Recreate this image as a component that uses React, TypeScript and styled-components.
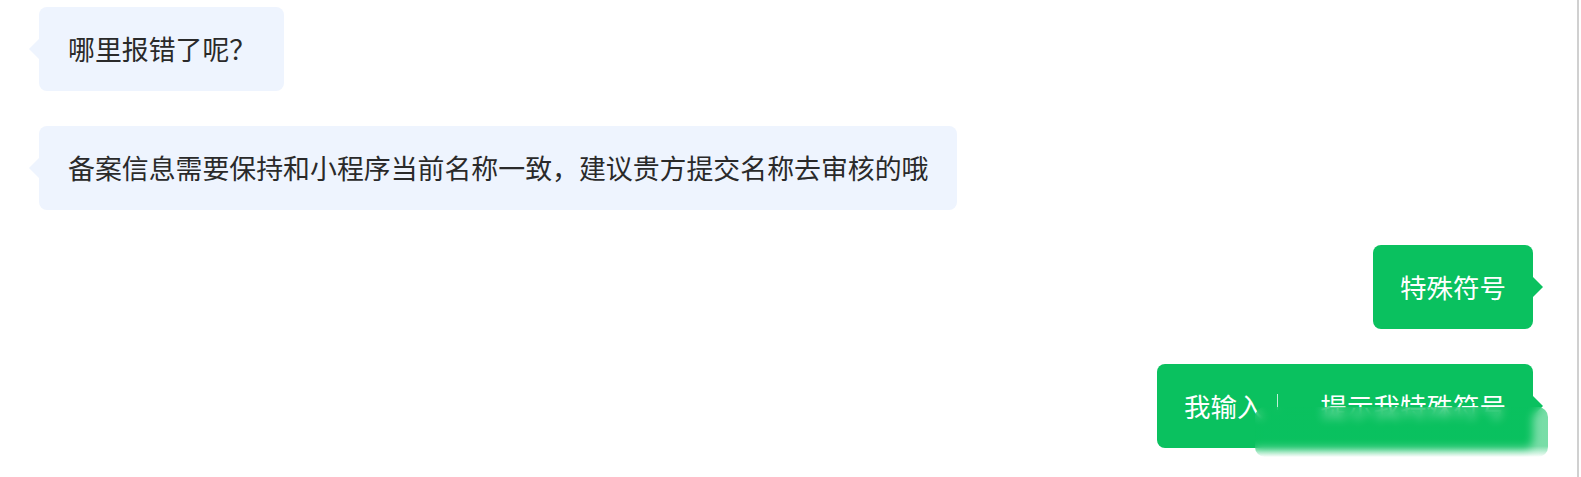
import React from "react";
import styled, { createGlobalStyle, css } from "styled-components";

const Global = createGlobalStyle`
  html, body { margin: 0; padding: 0; background: #ffffff; }
  body { font-family: "Noto Sans CJK SC", "Noto Sans", sans-serif; overflow: hidden; }
`;

const Frame = styled.div`
  width: 1579px;
  height: 477px;
  box-sizing: border-box;
  border-right: 2px solid #d0d0d0;
  position: relative;
  overflow: hidden;
`;

const Thread = styled.div`
  display: flex;
  flex-direction: column;
  gap: 35px;
  padding: 7px 44px 0 39px;
`;

const Row = styled.div<{ $mine?: boolean }>`
  display: flex;
  justify-content: ${(p) => (p.$mine ? "flex-end" : "flex-start")};
`;

const Bubble = styled.div<{ $mine?: boolean }>`
  position: relative;
  box-sizing: border-box;
  height: 84px;
  display: flex;
  align-items: center;
  border-radius: 8px;
  line-height: 36px;
  white-space: nowrap;
  ${(p) =>
    p.$mine
      ? css`
          background: #0ac15f;
          color: #ffffff;
          font-size: 26.5px;
          padding: 0 27px 0 27px;
        `
      : css`
          background: #eef4fe;
          color: #2a2a2a;
          font-size: 26.9px;
          padding: 0 28px 0 29px;
        `}
  &::before {
    content: "";
    position: absolute;
    top: 50%;
    margin-top: -10px;
    border-top: 10px solid transparent;
    border-bottom: 10px solid transparent;
    ${(p) =>
      p.$mine
        ? css`
            right: -10px;
            border-left: 10px solid #0ac15f;
          `
        : css`
            left: -10px;
            border-right: 10px solid #eef4fe;
          `}
  }
`;

const Caret = styled.span`
  display: inline-block;
  align-self: center;
  width: 1px;
  height: 16px;
  background: rgba(255, 255, 255, 0.75);
  margin: -8px 43px 0 13px;
`;

const Watermark = styled.div`
  position: absolute;
  left: 1255px;
  top: 407px;
  width: 293px;
  height: 50px;
  border-radius: 10px;
  backdrop-filter: blur(4px);
  -webkit-backdrop-filter: blur(4px);
  background: linear-gradient(
    to bottom,
    rgba(10, 193, 95, 0.55) 0%,
    rgba(10, 193, 95, 0.55) 78%,
    rgba(10, 193, 95, 0) 100%
  );
`;

export default function App() {
  return (
    <>
      <Global />
      <Frame>
        <Thread>
          <Row>
            <Bubble>哪里报错了呢？</Bubble>
          </Row>
          <Row>
            <Bubble>备案信息需要保持和小程序当前名称一致，建议贵方提交名称去审核的哦</Bubble>
          </Row>
          <Row $mine>
            <Bubble $mine>特殊符号</Bubble>
          </Row>
          <Row $mine>
            <Bubble $mine>
              我输入<Caret />提示我特殊符号
            </Bubble>
          </Row>
        </Thread>
        <Watermark />
      </Frame>
    </>
  );
}
